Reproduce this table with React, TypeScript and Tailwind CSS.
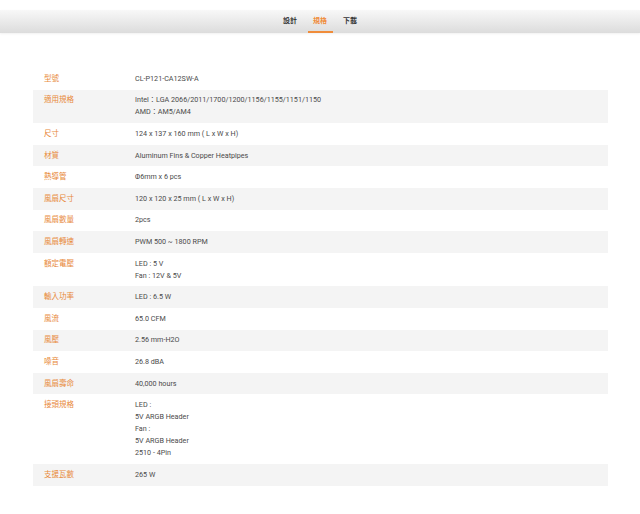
import React from "react";

const rows: { label: string; lines: string[] }[] = [
  { label: "型號", lines: ["CL-P121-CA12SW-A"] },
  { label: "適用規格", lines: ["Intel：LGA 2066/2011/1700/1200/1156/1155/1151/1150", "AMD：AM5/AM4"] },
  { label: "尺寸", lines: ["124 x 137 x 160 mm ( L x W x H)"] },
  { label: "材質", lines: ["Aluminum Fins & Copper Heatpipes"] },
  { label: "熱導管", lines: ["Φ6mm x 6 pcs"] },
  { label: "風扇尺寸", lines: ["120 x 120 x 25 mm ( L x W x H)"] },
  { label: "風扇數量", lines: ["2pcs"] },
  { label: "風扇轉速", lines: ["PWM 500 ~ 1800 RPM"] },
  { label: "額定電壓", lines: ["LED : 5 V", "Fan : 12V & 5V"] },
  { label: "輸入功率", lines: ["LED : 6.5 W"] },
  { label: "風流", lines: ["65.0 CFM"] },
  { label: "風壓", lines: ["2.56 mm-H2O"] },
  { label: "噪音", lines: ["26.8 dBA"] },
  { label: "風扇壽命", lines: ["40,000 hours"] },
  { label: "接頭規格", lines: ["LED :", "5V ARGB Header", "Fan :", "5V ARGB Header", "2510 - 4Pin"] },
  { label: "支援瓦數", lines: ["265 W"] },
];

const cjk = { fontFamily: 'Roboto, "Noto Sans CJK TC", sans-serif' };

export default function App() {
  return (
    <div className="w-[640px] h-[514px] bg-white overflow-hidden" style={cjk}>
      <div className="pt-[10px]">
        <div className="h-[23px] bg-gradient-to-b from-[#f8f8f8] to-[#dcdcdc] flex justify-center gap-[4px] shadow-[0_1px_2px_rgba(0,0,0,0.06)]">
          {[
            { t: "設計", active: false },
            { t: "規格", active: true },
            { t: "下載", active: false },
          ].map((tab) => (
            <div key={tab.t} className="w-[26px] h-full flex flex-col items-center">
              <div
                className={
                  "flex-1 flex items-center pt-[1px] text-[7px] font-bold leading-none " +
                  (tab.active ? "text-[#f08c3a]" : "text-[#333333]")
                }
              >
                {tab.t}
              </div>
              <div className={"h-[2px] w-[25px] " + (tab.active ? "bg-[#f08c3a]" : "bg-transparent")} />
            </div>
          ))}
        </div>
      </div>
      <div className="mt-[35px] ml-[33px] w-[575px] flex flex-col">
        {rows.map((r, i) => (
          <div
            key={r.label}
            className={"flex py-[4.8px] " + (i % 2 === 1 ? "bg-[#f4f4f4]" : "bg-white")}
          >
            <div className="w-[102px] pl-[11px] text-[7.5px] leading-[12px] text-[#e8893a]">{r.label}</div>
            <div className="flex flex-col text-[7.2px] leading-[12px] text-[#4a4a4a]">
              {r.lines.map((l, j) => (
                <div key={j}>{l}</div>
              ))}
            </div>
          </div>
        ))}
      </div>
    </div>
  );
}
